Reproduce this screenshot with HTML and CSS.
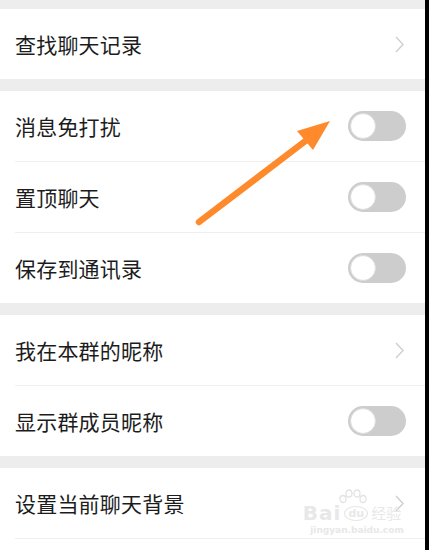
FILE: index.html
```html
<!DOCTYPE html>
<html lang="zh">
<head>
<meta charset="utf-8">
<link rel="stylesheet" href="styles.css">
</head>
<body>
<div class="page">
  <div class="group">
    <div class="row"><span class="label">查找聊天记录</span><svg class="chev" viewBox="0 0 9 17"><polyline points="1,1 8,8.5 1,16"/></svg></div>
  </div>
  <div class="group">
    <div class="row"><span class="label">消息免打扰</span><span class="toggle"><span class="knob"></span></span></div>
    <div class="row"><span class="label">置顶聊天</span><span class="toggle"><span class="knob"></span></span></div>
    <div class="row"><span class="label">保存到通讯录</span><span class="toggle"><span class="knob"></span></span></div>
  </div>
  <div class="group">
    <div class="row"><span class="label">我在本群的昵称</span><svg class="chev" viewBox="0 0 9 17"><polyline points="1,1 8,8.5 1,16"/></svg></div>
    <div class="row"><span class="label">显示群成员昵称</span><span class="toggle"><span class="knob"></span></span></div>
  </div>
  <div class="group last">
    <div class="row"><span class="label">设置当前聊天背景</span><svg class="chev" viewBox="0 0 9 17"><polyline points="1,1 8,8.5 1,16"/></svg></div>
  </div>
  <svg class="arrow" viewBox="0 0 429 550" width="429" height="550">
    <line x1="199" y1="222" x2="308" y2="139" stroke="#ff8a2c" stroke-width="6.5" stroke-linecap="round"/>
    <polygon points="330,121 297,131 313,150" fill="#ff8a2c"/>
  </svg>
  <div class="watermark">
    <svg class="paw" viewBox="0 0 30 16" width="30" height="16">
      <g fill="none" stroke="#e3e3e3" stroke-width="1.3">
        <ellipse cx="5" cy="10" rx="3" ry="3.5"/>
        <ellipse cx="11" cy="4.5" rx="3" ry="3.5"/>
        <ellipse cx="19" cy="4.5" rx="3" ry="3.5"/>
        <ellipse cx="25" cy="10" rx="3" ry="3.5"/>
      </g>
    </svg>
    <div class="wm-top"><span class="wm-bai">Bai</span><span class="wm-du">du</span><span class="wm-jy">经验</span></div>
    <div class="wm-url">jingyan.baidu.com</div>
  </div>
</div>
</body>
</html>
```
FILE: styles.css
```css
html, body {
  margin: 0;
  padding: 0;
  background: #000;
}
body {
  width: 429px;
  height: 550px;
  overflow: hidden;
  font-family: "Noto Sans CJK SC", "Noto Sans", sans-serif;
}
.page {
  position: relative;
  width: 425px;
  height: 550px;
  overflow: hidden;
  background: #ededed;
  padding-top: 9px;
  box-sizing: border-box;
  display: flex;
  flex-direction: column;
  gap: 12px;
}
.group {
  background: #fff;
  padding-left: 15px;
  display: flex;
  flex-direction: column;
}
.group.last {
  flex: 1;
}
.row {
  height: 70px;
  flex: none;
  display: flex;
  align-items: center;
  justify-content: space-between;
  padding-right: 19px;
}
.row + .row {
  border-top: 1px solid #efefef;
}
.group.last .row {
  border-bottom: 1px solid #efefef;
}
.label {
  font-size: 21px;
  color: #1c1c1c;
  line-height: 1;
  letter-spacing: 0.2px;
}
.chev {
  width: 9px;
  height: 17px;
  margin-right: 2px;
  fill: none;
  stroke: #cfcfcf;
  stroke-width: 1.4;
}
.toggle {
  width: 58px;
  height: 30px;
  border-radius: 15px;
  background: #cdcdcd;
  display: flex;
  align-items: center;
  padding-left: 2px;
  box-sizing: border-box;
}
.knob {
  width: 26px;
  height: 26px;
  border-radius: 50%;
  background: #fff;
  box-sizing: border-box;
  border: 1px solid #dcdcdc;
}
.arrow {
  position: absolute;
  left: 0;
  top: 0;
  pointer-events: none;
}
.watermark {
  position: absolute;
  left: 302px;
  top: 489px;
  width: 100px;
  color: #e8e8e8;
  font-family: "DejaVu Sans", sans-serif;
  display: flex;
  flex-direction: column;
  align-items: center;
}
.paw {
  margin-left: 2px;
  margin-bottom: -1px;
}
.wm-top {
  display: flex;
  align-items: center;
  gap: 3px;
  line-height: 18px;
}
.wm-bai {
  font-size: 20px;
  font-weight: bold;
  letter-spacing: 1px;
}
.wm-du {
  font-size: 11px;
  font-weight: bold;
  border: 1.5px solid #e6e6e6;
  border-radius: 50%;
  padding: 0 3px;
  line-height: 13px;
}
.wm-jy {
  font-family: "Noto Sans CJK SC", sans-serif;
  font-size: 15px;
}
.wm-url {
  font-size: 9px;
  line-height: 12px;
  font-weight: bold;
  margin-top: 2px;
  margin-left: 10px;
}
```
